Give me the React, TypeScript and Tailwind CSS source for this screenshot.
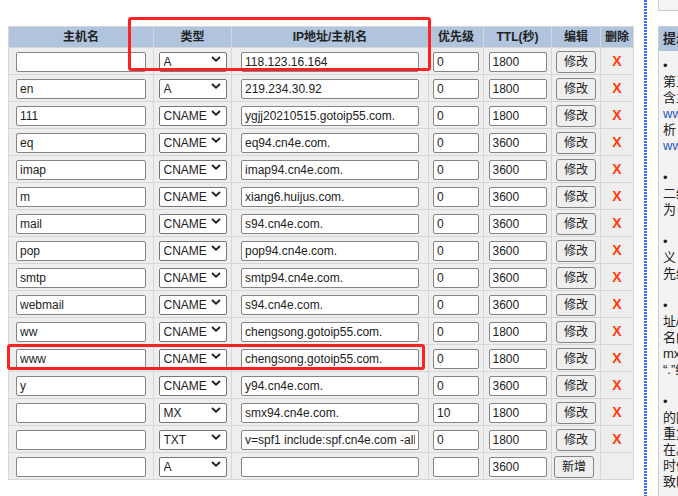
import React from 'react';

const rows = [
  ['', 'A', '118.123.16.164', '0', '1800'],
  ['en', 'A', '219.234.30.92', '0', '1800'],
  ['111', 'CNAME', 'ygjj20210515.gotoip55.com.', '0', '1800'],
  ['eq', 'CNAME', 'eq94.cn4e.com.', '0', '3600'],
  ['imap', 'CNAME', 'imap94.cn4e.com.', '0', '3600'],
  ['m', 'CNAME', 'xiang6.huijus.com.', '0', '3600'],
  ['mail', 'CNAME', 's94.cn4e.com.', '0', '3600'],
  ['pop', 'CNAME', 'pop94.cn4e.com.', '0', '3600'],
  ['smtp', 'CNAME', 'smtp94.cn4e.com.', '0', '3600'],
  ['webmail', 'CNAME', 's94.cn4e.com.', '0', '3600'],
  ['ww', 'CNAME', 'chengsong.gotoip55.com.', '0', '1800'],
  ['www', 'CNAME', 'chengsong.gotoip55.com.', '0', '1800'],
  ['y', 'CNAME', 'y94.cn4e.com.', '0', '3600'],
  ['', 'MX', 'smx94.cn4e.com.', '10', '1800'],
  ['', 'TXT', 'v=spf1 include:spf.cn4e.com -all', '0', '1800'],
];

// tip lines, one per 16px line; '' = blank line, blue = link colour
const tips: { t: string; blue?: boolean }[] = [
  { t: '•' },
  { t: '第三级域名前缀，不包括主域名' },
  { t: '含主域名部分，如要解析' },
  { t: 'www.cn4e.com', blue: true },
  { t: '析 则主机名填写' },
  { t: 'www', blue: true },
  { t: '' },
  { t: '•' },
  { t: '二级域名直接填写 @ 或留空' },
  { t: '为 空即解析主域名' },
  { t: '' },
  { t: '•' },
  { t: '义 MX记录需要设置优先级' },
  { t: '先级数字越小越优先' },
  { t: '' },
  { t: '•' },
  { t: '址/主机名填写邮件服务器' },
  { t: '名的完整地址，如' },
  { t: 'mx.cn4e.com.' },
  { t: '“.”结尾' },
  { t: '' },
  { t: '•' },
  { t: '的隔离记录不能与其他记录' },
  { t: '重复，同一主机名不能同时' },
  { t: '在。修改后生效需要一段' },
  { t: '时候，请耐心等待，不一' },
  { t: '致时请稍后再查询' },
];

const inputCls =
  'h-[20px] border border-[#858585] rounded-[2px] bg-white px-[3px] text-[12px] text-[#222] outline-none align-middle';

function TypeSelect({ value }: { value: string }) {
  return (
    <span className="relative inline-block align-middle">
      <select
        defaultValue={value}
        className="appearance-none w-[68px] h-[20px] border border-[#767676] rounded-[2px] bg-white pl-[4px] text-[12px] text-[#222] outline-none"
      >
        <option>A</option>
        <option>CNAME</option>
        <option>MX</option>
        <option>TXT</option>
        <option>AAAA</option>
        <option>NS</option>
      </select>
      <svg
        className="absolute right-[6px] top-[7px] pointer-events-none"
        width="10"
        height="6"
        viewBox="0 0 10 6"
      >
        <path d="M1 1 L5 4.6 L9 1" fill="none" stroke="#222" strokeWidth="1.9" />
      </svg>
    </span>
  );
}

function Btn({ label }: { label: string }) {
  return (
    <button className="w-[40px] h-[22px] border border-[#858585] rounded-[3px] bg-[#efefef] text-[12px] text-[#222] align-middle">
      {label}
    </button>
  );
}

const td = 'border border-[#d6d6d6] p-0 text-center align-middle';

const App = () => {
  return (
    <div className="relative w-[678px] h-[496px] overflow-hidden bg-white flex font-['Liberation_Sans','Noto_Sans_CJK_SC',sans-serif]">
      <div className="w-[644px] pl-2 pt-[26px]">
        <table className="table-fixed w-[625px] border-collapse border border-[#cccccc] bg-[#eeeeee]">
          <colgroup>
            <col className="w-[145px]" />
            <col className="w-[78px]" />
            <col className="w-[197px]" />
            <col className="w-[55px]" />
            <col className="w-[68px]" />
            <col className="w-[49px]" />
            <col className="w-[33px]" />
          </colgroup>
          <thead>
            <tr className="h-[21px] bg-[#b0c4de] text-[12px] font-bold text-[#222]">
              <th className={td}>主机名</th>
              <th className={td}>类型</th>
              <th className={td}>IP地址/主机名</th>
              <th className={td}>优先级</th>
              <th className={td}>TTL(秒)</th>
              <th className={td}>编辑</th>
              <th className={td}>删除</th>
            </tr>
          </thead>
          <tbody>
            {rows.map((r, i) => (
              <tr key={i} className="h-[27px]">
                <td className={td}>
                  <input defaultValue={r[0]} className={`${inputCls} w-[130px]`} />
                </td>
                <td className={td}>
                  <TypeSelect value={r[1]} />
                </td>
                <td className={td}>
                  <input defaultValue={r[2]} className={`${inputCls} w-[178px]`} />
                </td>
                <td className={td}>
                  <input defaultValue={r[3]} className={`${inputCls} w-[46px]`} />
                </td>
                <td className={td}>
                  <input defaultValue={r[4]} className={`${inputCls} w-[58px] text-[#5c1f73]`} />
                </td>
                <td className={td}>
                  <Btn label="修改" />
                </td>
                <td className={`${td} text-[14px] font-bold text-[#ff3c0a]`}>X</td>
              </tr>
            ))}
            <tr className="h-[27px]">
              <td className={td}>
                <input className={`${inputCls} w-[130px]`} />
              </td>
              <td className={td}>
                <TypeSelect value="A" />
              </td>
              <td className={td}>
                <input className={`${inputCls} w-[178px]`} />
              </td>
              <td className={td}>
                <input className={`${inputCls} w-[46px]`} />
              </td>
              <td className={td}>
                <input defaultValue="3600" className={`${inputCls} w-[58px] text-[#5c1f73]`} />
              </td>
              <td className={`${td} text-left pl-[2px]`}>
                <Btn label="新增" />
              </td>
              <td className={td}></td>
            </tr>
          </tbody>
        </table>
      </div>

      {/* dotted divider */}
      <div className="w-[3px] h-full bg-[repeating-linear-gradient(to_bottom,#3d6ff2_0px,#3d6ff2_2px,transparent_2px,transparent_3px)]" />

      {/* tips panel, cut by the window edge */}
      <div className="ml-[11px] flex-1 min-w-0 overflow-hidden">
        <div className="w-[220px] h-[11px] border-l border-b border-[#cccccc] bg-[#f4f4f4]" />
        <div className="mt-[15px] w-[220px] h-[480px] border border-[#cccccc] bg-[#f3f3f3] text-[13px] text-[#222]">
          <div className="h-[24px] bg-[#b0c4de] px-[4px] leading-[24px] font-bold whitespace-nowrap">提示信息</div>
          <div className="pt-[7px] pl-[4px]">
            {tips.map((l, i) => (
              <div
                key={i}
                className={`h-[16px] leading-[16px] whitespace-nowrap ${l.blue ? 'text-[#2457c5]' : ''}`}
              >
                {l.t}
              </div>
            ))}
          </div>
        </div>
      </div>

      {/* red annotation boxes */}
      <div className="absolute left-[128px] top-[17px] w-[303px] h-[54px] border-[3px] border-[#ff2222] rounded-[3px] pointer-events-none" />
      <div className="absolute left-[7px] top-[344px] w-[418px] h-[26px] border-[3px] border-[#ff2222] rounded-[3px] pointer-events-none" />
    </div>
  );
};

export default App;
